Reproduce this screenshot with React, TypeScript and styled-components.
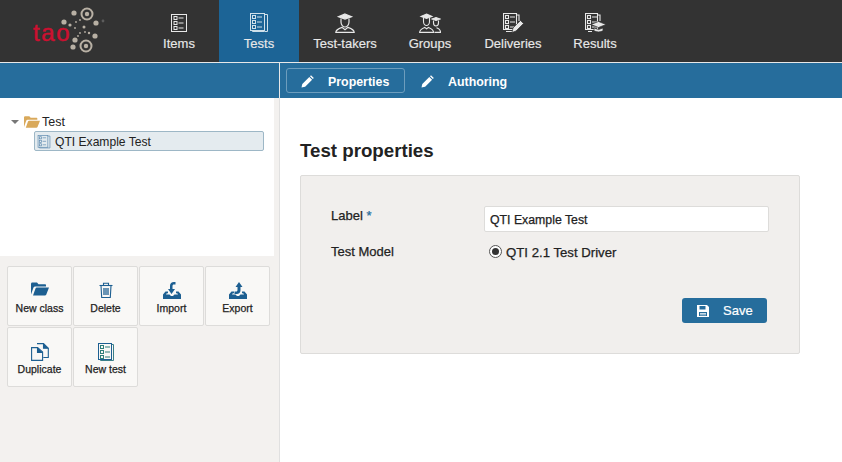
import React from "react";
import styled, { createGlobalStyle } from "styled-components";

const GlobalStyle = createGlobalStyle`
  html, body {
    margin: 0;
    padding: 0;
    background: #fff;
    font-family: "Liberation Sans", Arial, sans-serif;
    color: #222;
  }
`;

const Page = styled.div`
  width: 842px;
  height: 462px;
  overflow: hidden;
  display: flex;
  flex-direction: column;
`;

const Header = styled.header`
  height: 62px;
  background: #333333;
  display: flex;
  border-bottom: 1px solid #e8e8e8;
`;

const LogoBox = styled.div`
  width: 139px;
  flex: none;
  padding-left: 31px;
  box-sizing: border-box;

  svg {
    display: block;
  }
`;

const Nav = styled.nav`
  display: flex;
`;

const NavItem = styled.a<{ $active?: boolean; $width: number }>`
  width: ${(p) => p.$width}px;
  height: 62px;
  box-sizing: border-box;
  padding-top: 13px;
  display: flex;
  flex-direction: column;
  align-items: center;
  gap: 4px;
  font-size: 13px;
  line-height: 14px;
  color: #e8e8e8;
  -webkit-text-stroke: 0.15px #e8e8e8;
  background: ${(p) => (p.$active ? "#1c6496" : "transparent")};

  svg {
    display: block;
  }
`;

const ActionBar = styled.div`
  height: 35px;
  background: #266d9c;
  display: flex;
`;

const ActionSpacer = styled.div`
  width: 279px;
  flex: none;
  border-right: 1px solid #e8e8e8;
`;

const Tabs = styled.div`
  display: flex;
  align-items: center;
  padding-left: 6px;
  gap: 1px;
`;

const Tab = styled.a<{ $active?: boolean }>`
  height: 25px;
  width: 119px;
  box-sizing: border-box;
  display: flex;
  align-items: center;
  gap: 14px;
  padding: 2px 0 0 14px;
  border: 1px solid ${(p) => (p.$active ? "#6d9dbd" : "transparent")};
  border-radius: 3px;
  color: #fff;
  font-size: 12.4px;
  font-weight: 700;
`;

const Body = styled.div`
  flex: 1;
  display: flex;
  min-height: 0;
`;

const Sidebar = styled.aside`
  width: 280px;
  flex: none;
  box-sizing: border-box;
  background: #f3f1ef;
  border-right: 1px solid #e0e0e0;
`;

const TreePanel = styled.div`
  width: 274px;
  height: 158px;
  box-sizing: border-box;
  background: #fff;
  padding: 15px 0 0 11px;
`;

const TreeRoot = styled.div`
  display: flex;
  align-items: center;
  height: 17px;
  font-size: 12.5px;
  color: #222;

  svg {
    margin-right: 2px;
  }
`;

const Caret = styled.span`
  width: 0;
  height: 0;
  margin-right: 5px;
  border-left: 4px solid transparent;
  border-right: 4px solid transparent;
  border-top: 4px solid #777;
`;

const TreeLeaf = styled.div`
  margin: 1px 0 0 23px;
  width: 230px;
  height: 20px;
  box-sizing: border-box;
  display: flex;
  align-items: center;
  gap: 4px;
  padding: 1px 0 0 2px;
  background: #e4ebef;
  border: 1px solid #9db7c6;
  border-radius: 2px;
  font-size: 12.1px;
  color: #222;
`;

const ActionGrid = styled.div`
  display: grid;
  grid-template-columns: repeat(4, 65px);
  grid-auto-rows: 60px;
  gap: 1px;
  padding: 10px 0 0 7px;
`;

const ActionButton = styled.button`
  box-sizing: border-box;
  padding: 15px 0 0;
  margin: 0;
  background: #f9f8f6;
  border: 1px solid #dddcda;
  border-radius: 2px;
  display: flex;
  flex-direction: column;
  align-items: center;
  font-family: inherit;
  font-size: 10.5px;
  line-height: 12px;
  color: #222;
  -webkit-text-stroke: 0.25px #222;
`;

const ActionIconSlot = styled.span`
  height: 19px;
  margin-bottom: 1px;
  display: flex;
  align-items: flex-start;

  svg {
    display: block;
  }
`;

const Content = styled.main`
  flex: 1;
  padding: 42px 0 0 20px;
`;

const Title = styled.h2`
  margin: 0 0 13px;
  height: 22px;
  line-height: 22px;
  font-size: 18.7px;
  font-weight: 700;
  color: #222;
`;

const FormPanel = styled.section`
  width: 500px;
  height: 179px;
  box-sizing: border-box;
  background: #f1efed;
  border: 1px solid #dddcda;
  border-radius: 2px;
  padding: 30px 30px 0 30px;
`;

const FormRow = styled.div`
  display: grid;
  grid-template-columns: 153px 285px;
  align-items: center;
  min-height: 26px;
  margin-bottom: 7px;
`;

const FieldLabel = styled.label`
  font-size: 13px;
  color: #222;
  -webkit-text-stroke: 0.25px #222;
  position: relative;
  top: -4px;

  b {
    font-weight: 400;
    color: #266d9c;
    -webkit-text-stroke: 0.25px #266d9c;
  }
`;

const ModelLabel = styled(FieldLabel)`
  top: -1px;
`;

const TextInput = styled.div`
  height: 26px;
  box-sizing: border-box;
  display: flex;
  align-items: center;
  padding: 1px 0 0 5px;
  background: #fff;
  border: 1px solid #dddcda;
  border-radius: 2px;
  font-size: 12.3px;
  color: #222;
  -webkit-text-stroke: 0.25px #222;
`;

const RadioRow = styled.div`
  display: flex;
  align-items: center;
  gap: 4px;
  padding-left: 5px;
  font-size: 13.2px;
  color: #222;
  -webkit-text-stroke: 0.25px #222;
`;

const Radio = styled.span`
  width: 13px;
  height: 13px;
  box-sizing: border-box;
  border: 1px solid #555;
  border-radius: 50%;
  background: #fff;
  display: flex;
  align-items: center;
  justify-content: center;
  position: relative;
  top: -1px;

  &::after {
    content: "";
    width: 7px;
    height: 7px;
    border-radius: 50%;
    background: #333;
  }
`;

const FormFooter = styled.div`
  display: flex;
  justify-content: flex-end;
  padding: 26px 2px 0 0;
`;

const SaveButton = styled.button`
  width: 85px;
  height: 25px;
  padding: 0 0 0 15px;
  margin: 0;
  box-sizing: border-box;
  border: none;
  border-radius: 3px;
  background: #266d9c;
  color: #fff;
  font-family: inherit;
  font-size: 13px;
  -webkit-text-stroke: 0.2px #fff;
  display: flex;
  align-items: center;
  gap: 14px;
`;

const Logo = () => (
  <svg width="80" height="62" viewBox="31 0 80 62">
    <text
      x="33"
      y="41"
      fontFamily="'Liberation Sans', sans-serif"
      fontSize="24"
      letterSpacing="1.6"
      fill="#cc1030"
      stroke="#cc1030"
      strokeWidth="0.5"
    >
      tao
    </text>
    <g fill="#b8b0a4">
      <circle cx="74" cy="13" r="2.6" />
      <circle cx="64" cy="22" r="2.6" />
      <circle cx="96" cy="23" r="2.6" />
      <circle cx="95" cy="36" r="2.6" />
      <circle cx="75" cy="40" r="2.6" />
      <circle cx="73" cy="47" r="2.6" />
      <circle cx="70" cy="25" r="1.6" />
      <circle cx="84" cy="27" r="1.5" />
      <circle cx="89" cy="33" r="1.2" />
      <circle cx="76" cy="22" r="0.9" />
      <circle cx="80" cy="20" r="0.9" />
      <circle cx="75" cy="28" r="0.9" />
      <circle cx="80" cy="33" r="0.9" />
      <circle cx="85" cy="32" r="0.9" />
      <circle cx="78" cy="36" r="0.9" />
    </g>
    <g fill="none" stroke="#b8b0a4" strokeWidth="2">
      <circle cx="87" cy="14" r="5.500" />
      <circle cx="86" cy="46" r="5.500" />
    </g>
    <circle cx="87" cy="14" r="2.2" fill="#b8b0a4" />
    <circle cx="86" cy="46" r="2.2" fill="#b8b0a4" />
    <circle cx="103" cy="21" r="1.400" fill="#5c5c5c" />
  </svg>
);

const CheckList = ({ x, y }: { x: number; y: number }) => (
  <g transform={`translate(${x} ${y})`} fill="none">
    <rect x="0.5" y="0.5" width="3" height="3" />
    <rect x="0.5" y="5.5" width="3" height="3" />
    <rect x="0.5" y="10.5" width="3" height="3" />
    <path d="M5 2h5M5 7h5M5 12h5" />
  </g>
);

const ItemsIcon = () => (
  <svg width="16" height="20" viewBox="0 0 16 20" fill="none" stroke="#e8e8e8">
    <rect x="0.5" y="1.5" width="15" height="17" />
    <CheckList x={2.500} y={3} />
  </svg>
);

const TestsIcon = ({ color = "#cfe0ea", size = 20 }: { color?: string; size?: number }) => (
  <svg width={size} height={size} viewBox="0 0 20 20" fill="none" stroke={color}>
    <path d="M15.500 1.500h3v17h-3M15.500 18.500h-12v-1" />
    <rect x="1.500" y="0.500" width="14" height="17" />
    <CheckList x={3} y={2} />
  </svg>
);

const TakerIcon = () => (
  <svg width="20" height="20" viewBox="0 0 20 20" fill="none" stroke="#e8e8e8" strokeWidth="1.200">
    <path d="M10 1l6.500 2.800L10 6 3.500 3.800z" fill="#e8e8e8" />
    <path d="M6 5.500V9c0 2.800 2 5 4 5s4-2.200 4-5V5.500" />
    <path d="M.8 19.400c0-2.700 3.500-4 6.200-5l3 2.400 3-2.400c2.700 1 6.200 2.300 6.200 5z" />
  </svg>
);

const GroupsIcon = () => (
  <svg width="22" height="20" viewBox="0 0 22 20" fill="none" stroke="#e8e8e8" strokeWidth="1.100">
    <path d="M7.500 1L13 3.400l-5.500 2-5.500-2z" fill="#e8e8e8" />
    <path d="M4.500 5v3.500c0 2.300 1.500 4 3 4s3-1.700 3-4V5" />
    <path d="M.6 19.400c0-3 2.500-4 5-5l2 1.400 2-1.400c2.500 1 5 2 5 5z" />
    <path d="M13 6l4-1.500 4 1.500-4 1.500z" fill="#e8e8e8" />
    <path d="M14.500 7.500v2.300c0 1.800 1 3.200 2.500 3.200s2.500-1.400 2.500-3.200V7.500" />
    <path d="M15.500 19.400h6c0-2.800-2-4-4-4.600" />
  </svg>
);

const DeliveriesIcon = () => (
  <svg width="21" height="20" viewBox="0 0 21 20" fill="none" stroke="#e8e8e8" strokeWidth="1.100">
    <path d="M.5.5h13v16H.5z" />
    <path d="M13.500 2h2.500v6M3 18.500h7" />
    <CheckList x={2} y={2} />
    <path d="M9 19.500l1-4.500 7.500-7.500 3 3L13 18z" fill="#e8e8e8" stroke="#333" strokeWidth="0.7" />
  </svg>
);

const ResultsIcon = () => (
  <svg width="21" height="20" viewBox="0 0 21 20" fill="none" stroke="#e8e8e8" strokeWidth="1.100">
    <path d="M.5.5h12v16H.5z" />
    <path d="M12.500 2h2.500v6M3 18.500h4" />
    <CheckList x={2} y={2} />
    <path d="M13.500 8.500l7.500 3-7.500 3-7.500-3z" fill="#e8e8e8" stroke="#333" strokeWidth="0.7" />
    <path d="M9 15v2.800c2.500 1.500 6.500 1.500 9 0V15l-4.500 1.600z" fill="#e8e8e8" stroke="#333" strokeWidth="0.7" />
  </svg>
);

const PencilIcon = () => (
  <svg width="13" height="13" viewBox="0 0 13 13" fill="#fff">
    <path d="M0.500 12.500l.8-3.600 7-7 2.800 2.800-7 7z" />
    <path d="M9 1.200l1-1 2.800 2.800-1 1z" />
  </svg>
);

const FolderOpenIcon = ({ fill, width, height }: { fill: string; width: number; height: number }) => (
  <svg width={width} height={height} viewBox="0 0 18 13" fill={fill}>
    <path d="M0 12V1.500C0 .7.500 0 1.300 0H6l1.500 1.800h6.700c.5 0 .8.4.8.8V4H4.200C3.400 4 2.800 4.400 2.500 5z" />
    <path d="M2 13L4.500 6c.2-.6.700-.9 1.300-.9H18L15.200 12.200c-.2.500-.7.8-1.300.8z" />
  </svg>
);

const BLUE = "#1d5f91";

const DeleteIcon = () => (
  <svg width="14" height="16" viewBox="0 0 14 16" fill="none" stroke={BLUE} strokeWidth="1.100">
    <path d="M.5 3.500h13" />
    <path d="M4.500 3V1.200h5V3" />
    <path d="M2 3.500l.7 12h8.600l.7-12z" />
    <path d="M5 6v7M7 6v7M9 6v7" strokeWidth="1.300" />
  </svg>
);

const ImportIcon = () => (
  <svg width="18" height="17" viewBox="0 0 18 17" fill={BLUE}>
    <path d="M0 12.500L2.500 9.500H5v1.800H3.800L3 12.500h3.500L8 14h2l1.500-1.500H15l-.8-1.200H13V9.500h2.500l2.500 3V17H0z" />
    <path d="M12.500 0v2.500h-1.700c-.8 0-1.300.6-1.300 1.500v3H12l-3.500 5L5 7h2V3.800C7 1.500 8.500 0 11 0z" />
  </svg>
);

const ExportIcon = () => (
  <svg width="18" height="17" viewBox="0 0 18 17" fill={BLUE}>
    <path d="M0 12.500L2.500 9.500H5v1.800H3.800L3 12.500h3.500L8 14h2l1.500-1.500H15l-.8-1.200H13V9.500h2.500l2.500 3V17H0z" />
    <path d="M10 0l3.500 5H11.500v3.200c0 2.300-1.500 3.800-4 3.800H5.500V9.500h1.700c.8 0 1.300-.6 1.300-1.500V5h-2z" />
  </svg>
);

const DuplicateIcon = () => (
  <svg width="18" height="18" viewBox="0 0 18 18" fill="none" stroke={BLUE} strokeWidth="1.100">
    <path d="M6 .6h6.500l4.800 4.600v9.300h-5" />
    <path d="M12.500.6v4.600h4.800" fill={BLUE} />
    <path d="M.6 4.600h6l5 4.500v8.300h-11z" fill="#f9f8f6" />
    <path d="M6.500 4.600v4.800h5" fill={BLUE} />
  </svg>
);

const NewTestIcon = () => (
  <svg width="16" height="19" viewBox="0 0 16 19" fill="none" stroke={BLUE}>
    <path d="M13.500 1.500h2v16H2.500v-1" stroke="#3a7f88" />
    <rect x="0.500" y="0.500" width="13" height="16" />
    <g stroke="#2f7f7a">
      <CheckList x={2} y={2} />
    </g>
  </svg>
);

const SaveIcon = () => (
  <svg width="12" height="12" viewBox="0 0 12 12" fill="#fff">
    <path d="M0 0h10l2 2v10H0zM2.500 1v3.500h6V1zM2 7v4h8V7z" fillRule="evenodd" />
    <path d="M3 8h6v.8H3zM3 9.500h6v.8H3z" />
  </svg>
);

const navItems = [
  { label: "Items", width: 80, icon: <ItemsIcon /> },
  { label: "Tests", width: 80, icon: <TestsIcon />, active: true },
  { label: "Test-takers", width: 92, icon: <TakerIcon /> },
  { label: "Groups", width: 78, icon: <GroupsIcon /> },
  { label: "Deliveries", width: 88, icon: <DeliveriesIcon /> },
  { label: "Results", width: 76, icon: <ResultsIcon /> },
];

const actions = [
  { label: "New class", icon: <FolderOpenIcon fill={BLUE} width={18} height={14} /> },
  { label: "Delete", icon: <DeleteIcon /> },
  { label: "Import", icon: <ImportIcon /> },
  { label: "Export", icon: <ExportIcon /> },
  { label: "Duplicate", icon: <DuplicateIcon /> },
  { label: "New test", icon: <NewTestIcon /> },
];

export default function App() {
  return (
    <Page>
      <GlobalStyle />
      <Header>
        <LogoBox>
          <Logo />
        </LogoBox>
        <Nav>
          {navItems.map((item) => (
            <NavItem key={item.label} $active={item.active} $width={item.width}>
              {item.icon}
              {item.label}
            </NavItem>
          ))}
        </Nav>
      </Header>
      <ActionBar>
        <ActionSpacer />
        <Tabs>
          <Tab $active>
            <PencilIcon />
            Properties
          </Tab>
          <Tab>
            <PencilIcon />
            Authoring
          </Tab>
        </Tabs>
      </ActionBar>
      <Body>
        <Sidebar>
          <TreePanel>
            <TreeRoot>
              <Caret />
              <FolderOpenIcon fill="#d9a95b" width={16} height={12} />
              Test
            </TreeRoot>
            <TreeLeaf>
              <TestsIcon color="#5f8bb0" size={14} />
              QTI Example Test
            </TreeLeaf>
          </TreePanel>
          <ActionGrid>
            {actions.map((action) => (
              <ActionButton key={action.label}>
                <ActionIconSlot>{action.icon}</ActionIconSlot>
                {action.label}
              </ActionButton>
            ))}
          </ActionGrid>
        </Sidebar>
        <Content>
          <Title>Test properties</Title>
          <FormPanel>
            <FormRow>
              <FieldLabel>
                Label <b>*</b>
              </FieldLabel>
              <TextInput>QTI Example Test</TextInput>
            </FormRow>
            <FormRow>
              <ModelLabel>Test Model</ModelLabel>
              <RadioRow>
                <Radio />
                QTI 2.1 Test Driver
              </RadioRow>
            </FormRow>
            <FormFooter>
              <SaveButton>
                <SaveIcon />
                Save
              </SaveButton>
            </FormFooter>
          </FormPanel>
        </Content>
      </Body>
    </Page>
  );
}
